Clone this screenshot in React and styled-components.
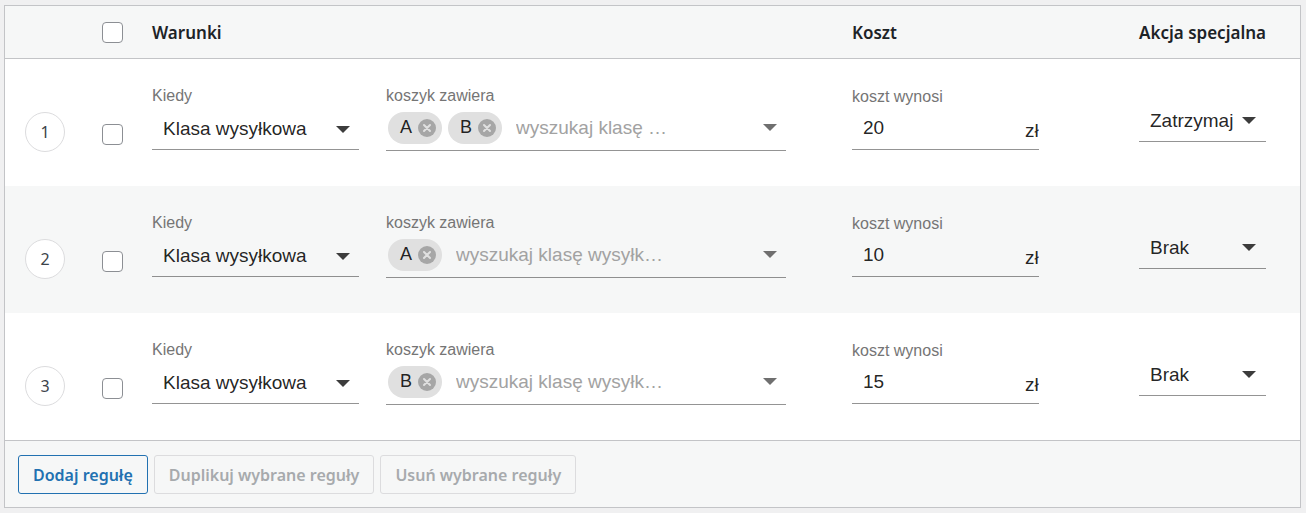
import React from "react";
import styled, { createGlobalStyle } from "styled-components";

const Global = createGlobalStyle`
  html, body { margin: 0; padding: 0; background: #f0f0f1; }
  body { font-family: "Liberation Sans", Arial, sans-serif; }
  * { box-sizing: border-box; }
`;

const Page = styled.div`
  padding: 5px 5px 5px 4px;
`;

const Table = styled.div`
  border: 1px solid #c3c4c7;
  background: #fff;
`;

const cols = "97px 50px 700px 287px 1fr";

const HeaderRow = styled.div`
  display: grid;
  grid-template-columns: ${cols};
  align-items: center;
  height: 53px;
  background: #f6f7f7;
  border-bottom: 1px solid #c3c4c7;
  font-family: "Noto Sans", "Open Sans", sans-serif;
  font-weight: 600;
  font-size: 17px;
  color: #1d2327;
`;

const HeadCell = styled.div`
  padding-top: 1px;
  white-space: nowrap;
`;

const Row = styled.div`
  display: grid;
  grid-template-columns: ${cols};
  align-items: center;
  height: 127px;
  background: ${(p) => (p.$alt ? "#f6f7f7" : "#fff")};
`;

const NumberCircle = styled.div`
  width: 40px;
  height: 40px;
  margin: 19px 0 0 20px;
  border-radius: 50%;
  border: 1px solid #dcdcde;
  background: #fff;
  display: flex;
  align-items: center;
  justify-content: center;
  font-family: "Noto Sans", sans-serif;
  font-size: 16px;
  color: #3c434a;
`;

const Check = styled.span`
  display: block;
  width: 21px;
  height: 21px;
  border: 1px solid #8c8f94;
  border-radius: 4px;
  background: #fff;
  margin-top: ${(p) => p.$mt || 0}px;
`;

const Conditions = styled.div`
  display: flex;
  gap: 27px;
  margin-bottom: 9px;
`;

const Field = styled.div`
  display: flex;
  flex-direction: column;
  width: ${(p) => p.$w}px;
  margin-bottom: ${(p) => p.$mb || 0}px;
`;

const Label = styled.div`
  font-size: 16px;
  line-height: 20px;
  color: #757575;
  white-space: nowrap;
`;

const Control = styled.div`
  display: flex;
  align-items: center;
  border-bottom: 1px solid rgba(0, 0, 0, 0.42);
  font-size: 19px;
  color: rgba(0, 0, 0, 0.87);
`;

const SelectControl = styled(Control)`
  height: 44px;
  padding: 4px 9px 0 11px;
  justify-content: space-between;
`;

const ActionSelect = styled(Control)`
  width: 127px;
  height: 39px;
  padding: 0 10px 3px 11px;
  justify-content: space-between;
`;

const AutoControl = styled(Control)`
  height: 45px;
  padding: 0 9px 0 2px;
  gap: 6px;
`;

const Chip = styled.span`
  display: inline-flex;
  align-items: center;
  height: 32px;
  border-radius: 16px;
  background: #e0e0e0;
  padding: 0 6px 0 12px;
  gap: 6px;
  font-size: 18px;
  color: rgba(0, 0, 0, 0.87);
  flex-shrink: 0;
`;

const Placeholder = styled.span`
  flex: 1;
  margin-left: 8px;
  color: #a2a2a2;
  white-space: nowrap;
  overflow: hidden;
`;

const CostControl = styled(Control)`
  height: 43px;
  padding: 1px 0 0 11px;
  overflow: hidden;
`;

const CostValue = styled.span`
  flex: 1;
`;

const Unit = styled.span`
  width: 14px;
  overflow: hidden;
  white-space: nowrap;
  padding-top: 6px;
`;

const Footer = styled.div`
  display: flex;
  gap: 6px;
  padding: 14px 13px 13px;
  background: #f6f7f7;
  border-top: 1px solid #c3c4c7;
`;

const Button = styled.button`
  height: 39px;
  padding: 0 14px;
  border-radius: 3px;
  background: #f6f7f7;
  font-family: "Noto Sans", "Open Sans", sans-serif;
  font-weight: 600;
  font-size: 16px;
  border: 1px solid ${(p) => (p.disabled ? "#dcdcde" : "#2271b1")};
  color: ${(p) => (p.disabled ? "#a7aaad" : "#2271b1")};
`;

const Arrow = ({ color = "#3c3c3c", w = 14 }) => (
  <svg width={w} height={7} viewBox="0 0 14 7">
    <path d="M0 0 L14 0 L7 7 Z" fill={color} />
  </svg>
);

const DeleteIcon = () => (
  <svg width="18" height="18" viewBox="0 0 18 18">
    <circle cx="9" cy="9" r="9" fill="#a6a6a6" />
    <path d="M6 6 L12 12 M12 6 L6 12" stroke="#e0e0e0" strokeWidth="2" strokeLinecap="round" />
  </svg>
);

const rules = [
  { n: 1, chips: ["A", "B"], ph: "wyszukaj klasę …", cost: "20", action: "Zatrzymaj" },
  { n: 2, chips: ["A"], ph: "wyszukaj klasę wysyłk…", cost: "10", action: "Brak" },
  { n: 3, chips: ["B"], ph: "wyszukaj klasę wysyłk…", cost: "15", action: "Brak" },
];

export default function App() {
  return (
    <Page>
      <Global />
      <Table>
        <HeaderRow>
          <div />
          <Check />
          <HeadCell>Warunki</HeadCell>
          <HeadCell>Koszt</HeadCell>
          <HeadCell>Akcja specjalna</HeadCell>
        </HeaderRow>
        {rules.map((r, i) => (
          <Row key={r.n} $alt={i === 1}>
            <NumberCircle>{r.n}</NumberCircle>
            <Check $mt={24} />
            <Conditions>
              <Field $w={207}>
                <Label>Kiedy</Label>
                <SelectControl>
                  <span>Klasa wysyłkowa</span>
                  <Arrow />
                </SelectControl>
              </Field>
              <Field $w={400}>
                <Label>koszyk zawiera</Label>
                <AutoControl>
                  {r.chips.map((c) => (
                    <Chip key={c}>
                      {c}
                      <DeleteIcon />
                    </Chip>
                  ))}
                  <Placeholder>{r.ph}</Placeholder>
                  <Arrow color="#6f6f6f" />
                </AutoControl>
              </Field>
            </Conditions>
            <Field $w={187} $mb={9}>
              <Label>koszt wynosi</Label>
              <CostControl>
                <CostValue>{r.cost}</CostValue>
                <Unit>zł</Unit>
              </CostControl>
            </Field>
            <ActionSelect>
              <span>{r.action}</span>
              <Arrow w={14} />
            </ActionSelect>
          </Row>
        ))}
        <Footer>
          <Button>Dodaj regułę</Button>
          <Button disabled>Duplikuj wybrane reguły</Button>
          <Button disabled>Usuń wybrane reguły</Button>
        </Footer>
      </Table>
    </Page>
  );
}
